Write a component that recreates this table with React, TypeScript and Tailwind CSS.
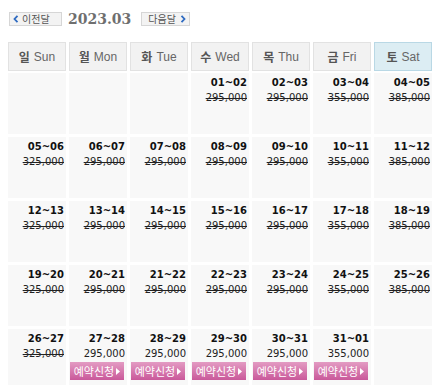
import React from "react";

type Cell = { d: string; p: string; open?: boolean } | null;

const rows: Cell[][] = [
  [null, null, null,
    { d: "01~02", p: "295,000" }, { d: "02~03", p: "295,000" }, { d: "03~04", p: "355,000" }, { d: "04~05", p: "385,000" }],
  [{ d: "05~06", p: "325,000" }, { d: "06~07", p: "295,000" }, { d: "07~08", p: "295,000" }, { d: "08~09", p: "295,000" },
    { d: "09~10", p: "295,000" }, { d: "10~11", p: "355,000" }, { d: "11~12", p: "385,000" }],
  [{ d: "12~13", p: "325,000" }, { d: "13~14", p: "295,000" }, { d: "14~15", p: "295,000" }, { d: "15~16", p: "295,000" },
    { d: "16~17", p: "295,000" }, { d: "17~18", p: "355,000" }, { d: "18~19", p: "385,000" }],
  [{ d: "19~20", p: "325,000" }, { d: "20~21", p: "295,000" }, { d: "21~22", p: "295,000" }, { d: "22~23", p: "295,000" },
    { d: "23~24", p: "295,000" }, { d: "24~25", p: "355,000" }, { d: "25~26", p: "385,000" }],
  [{ d: "26~27", p: "325,000" }, { d: "27~28", p: "295,000", open: true }, { d: "28~29", p: "295,000", open: true },
    { d: "29~30", p: "295,000", open: true }, { d: "30~31", p: "295,000", open: true }, { d: "31~01", p: "355,000", open: true }, null],
];

const heads = [
  ["일", "Sun"], ["월", "Mon"], ["화", "Tue"], ["수", "Wed"], ["목", "Thu"], ["금", "Fri"], ["토", "Sat"],
];

const kr = { fontFamily: '"Noto Sans CJK KR", "Liberation Sans", sans-serif' };
const num = { fontFamily: '"DejaVu Sans", "Liberation Sans", sans-serif' };

export default function App() {
  return (
    <div className="w-[439px] h-[385px] bg-white overflow-hidden" style={kr}>
      <div className="flex items-center pl-[9px] pt-[12px] h-[26px]">
        <div className="flex items-center h-[14px] w-[53px] border border-[#d6d6d6] bg-[#f3f3f3] pl-[3px] text-[10px] text-[#555] leading-none">
          <svg width="6" height="8" viewBox="0 0 6 8" className="mr-[3px]">
            <path d="M4.5 0.8 L1.5 4 L4.5 7.2" stroke="#2f6bc1" strokeWidth="1.8" fill="none" />
          </svg>
          <span>이전달</span>
        </div>
        <div className="ml-[6px] text-[14px] font-bold text-[#6f6f6f] leading-none" style={{ fontFamily: '"DejaVu Serif", serif' }}>
          2023.03
        </div>
        <div className="ml-[10px] flex items-center h-[14px] w-[49px] border border-[#d6d6d6] bg-[#f3f3f3] pl-[6px] text-[10px] text-[#555] leading-none">
          <span>다음달</span>
          <svg width="6" height="8" viewBox="0 0 6 8" className="ml-[4px]">
            <path d="M1.5 0.8 L4.5 4 L1.5 7.2" stroke="#2f6bc1" strokeWidth="1.8" fill="none" />
          </svg>
        </div>
      </div>

      <div className="ml-[8px] mt-[16px] grid grid-cols-[repeat(7,58px)] gap-[3px]">
        {heads.map(([k, e], i) => (
          <div
            key={i}
            className={
              "h-[29px] flex items-center justify-center text-[12px] border " +
              (i === 6 ? "bg-[#dcedf3] border-[#b9d8e5]" : "bg-[#f2f2f2] border-[#e2e2e2]")
            }
          >
            <span className="font-bold text-[#555]">{k}</span>
            <span className="ml-[4px] text-[#666]" style={{ fontFamily: '"Liberation Sans", sans-serif' }}>{e}</span>
          </div>
        ))}
      </div>

      <div className="ml-[8px] mt-[2px] flex flex-col gap-[3px]">
        {rows.map((r, ri) => (
          <div key={ri} className="grid grid-cols-[repeat(7,58px)] gap-[3px]">
            {r.map((c, ci) => (
              <div key={ci} className="h-[61px] bg-[#f8f8f8] pt-[2px] flex flex-col items-end">
                {c && (
                  <>
                    <div className="pr-[2px] text-[10px] leading-[15px] font-bold text-[#111]" style={num}>{c.d}</div>
                    <div
                      className={"pr-[2px] text-[10px] leading-[15px] text-[#222] " + (c.open ? "" : "line-through")}
                      style={num}
                    >
                      {c.p}
                    </div>
                    {c.open && (
                      <div className="mt-[1px] mr-[3px] h-[18px] w-[54px] flex items-center justify-center bg-gradient-to-b from-[#e39bc3] to-[#c9589a] text-white text-[11px] leading-none">
                        <span>예약신청</span>
                        <svg width="4" height="7" viewBox="0 0 4 7" className="ml-[2px]">
                          <path d="M0 0 L4 3.5 L0 7 Z" fill="#fff" />
                        </svg>
                      </div>
                    )}
                  </>
                )}
              </div>
            ))}
          </div>
        ))}
      </div>
    </div>
  );
}
